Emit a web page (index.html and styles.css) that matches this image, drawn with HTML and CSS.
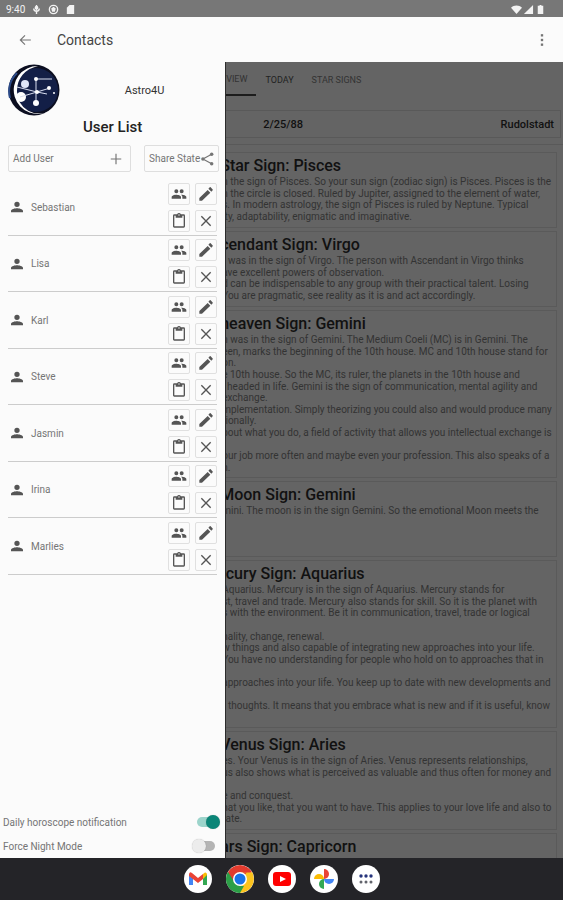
FILE: index.html
```
<!DOCTYPE html>
<html lang="en">

<head>
    <meta charset="UTF-8">
    <meta name="viewport" content="width=device-width, initial-scale=1.0">
    <title>Astro4U</title>
    <link rel="stylesheet" href="styles.css">
</head>

<body>

    <!-- Shared icons -->
    <svg class="sprite" aria-hidden="true">
        <symbol id="person" viewBox="0 0 24 24"><path d="M12 12a4 4 0 1 0 0-8 4 4 0 0 0 0 8zm0 2c-2.700 0-9 1.300-9 4v2h18v-2c0-2.700-6.300-4-9-4z"/></symbol>
        <symbol id="people" viewBox="0 0 24 24"><path d="M16 11a3 3 0 1 0 0-6 3 3 0 0 0 0 6zm-8 0a3 3 0 1 0 0-6 3 3 0 0 0 0 6zm0 2c-2.300 0-7 1.200-7 3.500V19h14v-2.500C15 14.200 10.300 13 8 13zm8 0l-1 .05c1.200.84 2 1.970 2 3.450V19h6v-2.500c0-2.300-4.700-3.500-7-3.500z"/></symbol>
        <symbol id="pencil" viewBox="0 0 24 24"><path d="M2 18v4h4L18.500 10l-4-4L2 18zM22 6.500a1 1 0 0 0 0-1.400L19 2a1 1 0 0 0-1.400 0l-2 2L20 8.500z"/></symbol>
        <symbol id="clipboard" viewBox="0 0 24 24"><path d="M19 2h-4.200a3 3 0 0 0-5.600 0H5a2 2 0 0 0-2 2v16c0 1.100.9 2 2 2h14a2 2 0 0 0 2-2V4a2 2 0 0 0-2-2zm-7 0a1 1 0 1 1 0 2 1 1 0 0 1 0-2zm7 18H5V4h2v3h10V4h2v16z"/></symbol>
        <symbol id="close" viewBox="0 0 24 24"><path d="M5 5l14 14M19 5L5 19" fill="none" stroke="currentColor" stroke-width="2"/></symbol>
    </svg>

    <div class="status-bar">
        <div class="status-group">
            <span>9:40</span>
            <svg class="status-icon" viewBox="0 0 12 12"><path d="M6 1v6M3 5c0 4 6 4 6 0M6 8v3" fill="none" stroke="currentColor" stroke-width="1.500"/><circle cx="6" cy="4" r="2"/></svg>
            <svg class="status-icon" viewBox="0 0 12 12"><circle cx="6" cy="6" r="4.500" fill="none" stroke="currentColor" stroke-width="1.500"/><path d="M6 3l2.500 2-1 3.500h-3l-1-3.500z"/></svg>
            <svg class="status-icon" viewBox="0 0 12 12"><path d="M5 1h5v10H2V4z"/></svg>
        </div>
        <div class="status-group status-right">
            <svg class="status-icon" viewBox="0 0 12 12"><path d="M0 4c3-3 9-3 12 0L6 11z"/></svg>
            <svg class="status-icon" viewBox="0 0 12 12"><path d="M11 1v10H1z"/></svg>
            <svg class="status-icon" viewBox="0 0 12 12"><path d="M3 2h2V1h2v1h2v9H3z"/></svg>
        </div>
    </div>

    <header class="app-bar">
        <button class="bar-button" aria-label="Back">
            <svg viewBox="0 0 24 24"><path d="M22 12H4M12 4l-8 8 8 8" fill="none" stroke="currentColor" stroke-width="2"/></svg>
        </button>
        <h1>Contacts</h1>
        <button class="bar-button" aria-label="More options">
            <svg viewBox="0 0 24 24"><rect x="10" y="2" width="4" height="4"/><rect x="10" y="10" width="4" height="4"/><rect x="10" y="18" width="4" height="4"/></svg>
        </button>
    </header>

    <main class="main">
        <aside class="drawer">
            <div class="brand">
                <svg class="brand-logo" viewBox="0 0 52 52">
                    <circle cx="26" cy="26" r="25.500" fill="#0b0e20"/>
                    <circle cx="28" cy="26" r="22" fill="#131f47"/>
                    <path d="M30 2A24 24 0 1 0 43 46A22 22 0 0 1 9 27C9 14 17 5 30 2z" fill="#fff"/>
                    <path d="M9 9A25 25 0 0 0 2 34" fill="none" stroke="#2b4a88" stroke-width="2"/>
                    <circle cx="17" cy="20" r="4" fill="#dfe6f8"/>
                    <circle cx="13" cy="33" r="5" fill="#fff"/>
                    <path d="M44 15H28v24M9 23l20 5 13-4M12 33l17-5 10 2" fill="none" stroke="#d8def0" stroke-width="1"/>
                    <g fill="#fff"><circle cx="28" cy="15" r="2"/><circle cx="29" cy="28" r="2"/><circle cx="28" cy="39" r="3"/><circle cx="41" cy="24" r="2"/><circle cx="46" cy="29" r="1"/></g>
                </svg>
                <span class="brand-name">Astro4U</span>
            </div>
            <h2>User List</h2>
            <div class="actions">
                <button class="action action-add">Add User
                    <svg viewBox="0 0 24 24"><path d="M12 3v18M3 12h18" fill="none" stroke="currentColor" stroke-width="2"/></svg>
                </button>
                <button class="action">Share State
                    <svg viewBox="0 0 24 24"><path d="M20 4L5 12l15 8" fill="none" stroke="currentColor" stroke-width="2"/><circle cx="20" cy="4" r="3"/><circle cx="5" cy="12" r="3"/><circle cx="20" cy="20" r="3"/></svg>
                </button>
            </div>
            <ul id="userList" class="user-list"></ul>
            <div class="settings">
                <div class="setting">
                    <label for="daily">Daily horoscope notification</label>
                    <input type="checkbox" id="daily" class="switch" checked>
                </div>
                <div class="setting">
                    <label for="night">Force Night Mode</label>
                    <input type="checkbox" id="night" class="switch">
                </div>
            </div>
        </aside>

        <section class="content">
            <nav class="tabs">
                <button class="tab active">VIEW</button>
                <button class="tab tab-dark">TODAY</button>
                <button class="tab">STAR SIGNS</button>
            </nav>
            <div class="birth">
                <span>2/25/88</span>
                <span>Rudolstadt</span>
            </div>
            <div id="signList" class="sign-list"></div>
        </section>
    </main>

    <footer class="dock">
        <button class="dock-app" aria-label="Mail">
            <svg viewBox="0 0 28 28"><path d="M5 9v11h4v-8z" fill="#4285f4"/><path d="M19 12v8h4V9z" fill="#34a853"/><path d="M19 9l2-1.500Q23 7 23 10l-4 4z" fill="#fbbc04"/><path d="M5 10Q5 6 8 8l6 5 5-4v5l-5 4-9-7z" fill="#ea4335"/></svg>
        </button>
        <button class="dock-app" aria-label="Browser">
            <svg viewBox="0 0 28 28"><path d="M14 14L1.900 7A14 14 0 0 1 26.100 7z" fill="#e33b2e"/><path d="M14 14L26.100 7A14 14 0 0 1 14 28z" fill="#fcc31e"/><path d="M14 14v14A14 14 0 0 1 1.900 7z" fill="#2c9f47"/><path d="M14 7.500h12.400L27 14 14 28l5.600-10.700z" fill="#fcc31e"/><path d="M1.900 7L8.400 17.300 14 14l7-6.500H12z" fill="#e33b2e"/><path d="M1.900 7l6.500 10.300L14 21l4 0-4 7A14 14 0 0 1 1.900 7z" fill="#2c9f47"/><circle cx="14" cy="14" r="7" fill="#fff"/><circle cx="14" cy="14" r="5.500" fill="#1a73e8"/></svg>
        </button>
        <button class="dock-app" aria-label="Video">
            <svg viewBox="0 0 28 28"><rect x="5" y="7" width="18" height="14" rx="3" fill="#f00"/><path d="M12 11l6 3-6 3z" fill="#fff"/></svg>
        </button>
        <button class="dock-app" aria-label="Photos">
            <svg viewBox="0 0 28 28"><path d="M14 4a5 5 0 0 1 0 10z" fill="#ea4335"/><path d="M24 14a5 5 0 0 1-10 0z" fill="#4285f4"/><path d="M14 24a5 5 0 0 1 0-10z" fill="#34a853"/><path d="M4 14a5 5 0 0 1 10 0z" fill="#fbbc04"/></svg>
        </button>
        <button class="dock-app" aria-label="All apps">
            <svg viewBox="0 0 28 28"><g fill="#26347c"><circle cx="9" cy="11" r="1.700"/><circle cx="14" cy="11" r="1.700"/><circle cx="19" cy="11" r="1.700"/></g><g fill="#62646c"><circle cx="9" cy="17" r="1.500"/><circle cx="14" cy="17" r="1.500"/><circle cx="19" cy="17" r="1.500"/></g></svg>
        </button>
    </footer>

    <script>
        const users = ["Sebastian", "Lisa", "Karl", "Steve", "Jasmin", "Irina", "Marlies"];

        const userActions = [
            { icon: "people", label: "Compare" },
            { icon: "pencil", label: "Edit" },
            { icon: "clipboard", label: "Copy" },
            { icon: "close", label: "Delete" },
        ];

        // An empty string is a blank line
        const signs = [
            {
                title: "Star Sign: Pisces", lines: [
                    "n the sign of Pisces. So your sun sign (zodiac sign) is Pisces. Pisces is the",
                    "n the circle is closed. Ruled by Jupiter, assigned to the element of water,",
                    "s. In modern astrology, the sign of Pisces is ruled by Neptune. Typical",
                    "ity, adaptability, enigmatic and imaginative."]
            },
            {
                title: "cendant Sign: Virgo", lines: [
                    "t was in the sign of Virgo. The person with Ascendant in Virgo thinks",
                    "ave excellent powers of observation.",
                    "d can be indispensable to any group with their practical talent. Losing",
                    "You are pragmatic, see reality as it is and act accordingly."]
            },
            {
                title: "heaven Sign: Gemini", lines: [
                    "n was in the sign of Gemini. The Medium Coeli (MC) is in Gemini. The",
                    "een, marks the beginning of the 10th house. MC and 10th house stand for",
                    "on.",
                    "e 10th house. So the MC, its ruler, the planets in the 10th house and",
                    "l headed in life. Gemini is the sign of communication, mental agility and",
                    "exchange.",
                    "mplementation. Simply theorizing you could also and would produce many",
                    "tionally.",
                    "bout what you do, a field of activity that allows you intellectual exchange is",
                    "",
                    "our job more often and maybe even your profession. This also speaks of a",
                    "h."]
            },
            {
                title: "Moon Sign: Gemini", lines: [
                    "mini. The moon is in the sign Gemini. So the emotional Moon meets the",
                    "", "", ""]
            },
            {
                title: "rcury Sign: Aquarius", lines: [
                    "Aquarius. Mercury is in the sign of Aquarius. Mercury stands for",
                    "st, travel and trade. Mercury also stands for skill. So it is the planet with",
                    "s with the environment. Be it in communication, travel, trade or logical",
                    "",
                    "nality, change, renewal.",
                    "w things and also capable of integrating new approaches into your life.",
                    "You have no understanding for people who hold on to approaches that in",
                    "",
                    "approaches into your life. You keep up to date with new developments and",
                    "",
                    "r thoughts. It means that you embrace what is new and if it is useful, know",
                    ""]
            },
            {
                title: "Venus Sign: Aries", lines: [
                    "es. Your Venus is in the sign of Aries. Venus represents relationships,",
                    "us also shows what is perceived as valuable and thus often for money and",
                    "",
                    "e and conquest.",
                    "hat you like, that you want to have. This applies to your love life and also to",
                    "tate."]
            },
            { title: "ars Sign: Capricorn", lines: ["", ""] },
        ];

        document.getElementById('userList').innerHTML = users.map(name => `
            <li class="user">
                <svg class="user-icon"><use href="#person"/></svg>
                <span class="user-name">${name}</span>
                <div class="user-actions">
                    ${userActions.map(action => `<button class="icon-button" aria-label="${action.label} ${name}"><svg><use href="#${action.icon}"/></svg></button>`).join('')}
                </div>
            </li>`).join('');

        document.getElementById('signList').innerHTML = signs.map(sign => `
            <article class="sign">
                <h3>${sign.title}</h3>
                <div class="sign-text">${sign.lines.map(line => `<span>${line}</span>`).join('')}</div>
            </article>`).join('');
    </script>
</body>

</html>
```
FILE: styles.css
```
* {
    box-sizing: border-box;
}

body {
    font-family: Roboto, "Liberation Sans", sans-serif;
    margin: 0;
    height: 100vh;
    display: flex;
    flex-direction: column;
    background-color: #fbfbfb;
    color: #757575;
    font-size: 10px;
}

h1,
h2,
h3,
ul {
    margin: 0;
    padding: 0;
}

button {
    font: inherit;
    color: inherit;
    padding: 0;
    border: none;
    background: none;
}

svg {
    fill: currentColor;
    display: block;
}

.sprite {
    position: absolute;
    width: 0;
    height: 0;
}

/* Top bars */
.status-bar {
    height: 17px;
    flex-shrink: 0;
    display: flex;
    justify-content: space-between;
    align-items: center;
    padding: 1px 17px 0 6px;
    background-color: #777;
    color: #f2f2f2;
}

.status-group {
    display: flex;
    align-items: center;
    gap: 6px;
}

.status-right {
    gap: 1px;
}

.status-icon {
    width: 11px;
    height: 11px;
}

.app-bar {
    height: 45px;
    flex-shrink: 0;
    display: flex;
    align-items: center;
    padding: 0 14px 0 18px;
}

.app-bar h1 {
    flex: 1;
    margin-left: 25px;
    font-size: 14px;
    font-weight: 400;
    color: #444;
}

.bar-button svg {
    width: 14px;
    height: 14px;
}

.main {
    flex: 1;
    min-height: 0;
    display: flex;
}

/* Drawer */
.drawer {
    width: 40%;
    flex-shrink: 0;
    display: flex;
    flex-direction: column;
    padding: 2px 8px 0;
}

.brand {
    display: flex;
    align-items: center;
}

.brand-logo {
    width: 52px;
    height: 52px;
}

.brand-name {
    flex: 1;
    padding-left: 12px;
    text-align: center;
    font-size: 11px;
    color: #333;
}

.drawer h2 {
    text-align: center;
    font-size: 15px;
    line-height: 22px;
    font-weight: 500;
    color: #222;
}

.actions {
    display: flex;
    gap: 13px;
    margin-top: 7px;
    margin-right: -2px;
}

.action {
    height: 27px;
    display: flex;
    align-items: center;
    justify-content: space-between;
    padding: 0 4px;
    border: 1px solid #dedede;
    border-radius: 2px;
    white-space: nowrap;
}

.action-add {
    flex: 1;
    padding-right: 7px;
}

.action svg {
    width: 14px;
    height: 14px;
}

.user-list {
    display: grid;
    grid-auto-rows: 57px 56px;
    margin-top: 7px;
    list-style: none;
}

.user {
    display: flex;
    align-items: center;
    border-bottom: 1px solid #ccc;
}

.user-icon {
    width: 16px;
    height: 16px;
    margin-left: 1px;
    color: #555;
}

.user-name {
    flex: 1;
    margin-left: 6px;
}

.user-actions {
    display: grid;
    grid-template-columns: 22px 22px;
    gap: 5px;
}

.icon-button {
    height: 22px;
    display: grid;
    place-items: center;
    border: 1px solid #e0e0e0;
    border-radius: 2px;
    color: #555;
}

.icon-button svg {
    width: 16px;
    height: 16px;
}

.settings {
    margin: auto -5px 0;
}

.setting {
    height: 24px;
    display: flex;
    align-items: center;
    justify-content: space-between;
    padding-right: 2px;
}

.switch {
    appearance: none;
    display: grid;
    align-items: center;
    width: 28px;
    height: 14px;
    margin: 0;
}

.switch::before,
.switch::after {
    content: "";
    grid-area: 1 / 1;
}

.switch::before {
    width: 18px;
    height: 10px;
    justify-self: center;
    border-radius: 5px;
    background-color: #b4b4b4;
}

.switch::after {
    width: 14px;
    height: 14px;
    border-radius: 50%;
    background-color: #ececec;
    box-shadow: 0 0 1px rgba(0, 0, 0, 0.3);
}

.switch:checked::before {
    background-color: #9cd4cb;
}

.switch:checked::after {
    justify-self: end;
    background-color: #0b8577;
}

/* Dimmed page, runs on under the drawer's edge */
.content {
    flex: 1;
    min-width: 0;
    overflow: hidden;
    background-color: #646464;
    color: #333;
    border-left: 1px solid #2c2c2c;
    white-space: nowrap;
}

.tabs {
    display: flex;
    height: 34px;
    font-size: 9px;
}

.tab {
    padding: 2px 9px 0;
}

.tab-dark {
    color: #222;
}

.tab.active {
    padding-left: 0;
    border-bottom: 2px solid #1c1c1c;
}

.birth {
    display: flex;
    justify-content: space-between;
    align-items: center;
    height: 28px;
    margin: 14px 2px 6px 0;
    padding: 0 6px 0 37px;
    border: 1px solid #595959;
    border-left: none;
    font-size: 11px;
    font-weight: 500;
    color: #111;
}

.sign-list {
    padding: 7px 6px 0 0;
    border-top: 1px solid #595959;
}

.sign {
    margin-bottom: 3px;
    padding: 3px 0 4px;
    border: 1px solid #5a5a5a;
    border-left: none;
}

.sign h3 {
    margin-left: -6px;
    font-size: 16px;
    line-height: 20px;
    font-weight: 500;
    color: #111;
}

.sign-text {
    display: grid;
    grid-auto-rows: 12px 11px 12px 12px 11px;
    margin-left: -4px;
    font-size: 10px;
    line-height: 12px;
}

/* Dock */
.dock {
    height: 42px;
    flex-shrink: 0;
    display: flex;
    justify-content: center;
    align-items: center;
    gap: 14px;
    background-color: #242428;
}

.dock-app {
    width: 28px;
    height: 28px;
    border-radius: 50%;
    background-color: #fff;
    overflow: hidden;
}
```
